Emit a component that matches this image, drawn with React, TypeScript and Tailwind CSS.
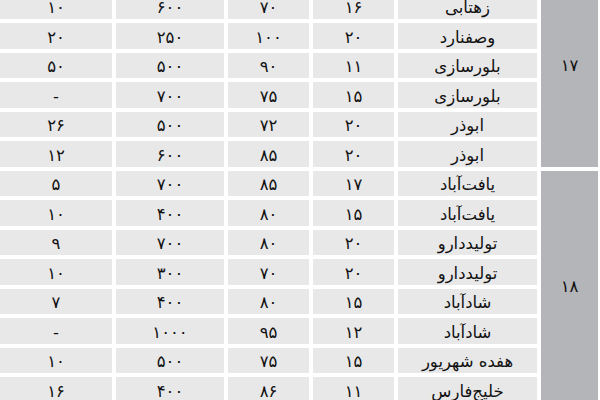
type Row = [string, string, string, string, string];

const groups: { label: string; rows: Row[] }[] = [
  {
    label: "۱۷",
    rows: [
      ["زهتابی", "۱۶", "۷۰", "۶۰۰", "۱۰"],
      ["وصفنارد", "۲۰", "۱۰۰", "۲۵۰", "۲۰"],
      ["بلورسازی", "۱۱", "۹۰", "۵۰۰", "۵۰"],
      ["بلورسازی", "۱۵", "۷۵", "۷۰۰", "-"],
      ["ابوذر", "۲۰", "۷۲", "۵۰۰", "۲۶"],
      ["ابوذر", "۲۰", "۸۵", "۶۰۰", "۱۲"],
    ],
  },
  {
    label: "۱۸",
    rows: [
      ["یافت‌آباد", "۱۷", "۸۵", "۷۰۰", "۵"],
      ["یافت‌آباد", "۱۵", "۸۰", "۴۰۰", "۱۰"],
      ["تولیددارو", "۲۰", "۸۰", "۷۰۰", "۹"],
      ["تولیددارو", "۲۰", "۷۰", "۳۰۰", "۱۰"],
      ["شادآباد", "۱۵", "۸۰", "۴۰۰", "۷"],
      ["شادآباد", "۱۲", "۹۵", "۱۰۰۰", "-"],
      ["هفده شهریور", "۱۵", "۷۵", "۵۰۰", "۱۰"],
      ["خلیج‌فارس", "۱۱", "۸۶", "۴۰۰", "۱۶"],
    ],
  },
];

export default function App() {
  return (
    <div className="w-[600px] h-[400px] overflow-hidden bg-white">
      <div
        dir="rtl"
        className="grid grid-cols-[57px_139px_81px_81px_108px_1fr] auto-rows-[25.5px] gap-[4px] mr-[2px] -mt-[6.5px] text-[16.5px] text-[#111]"
        style={{ fontFamily: '"DejaVu Sans", sans-serif' }}
      >
        {groups.map((g, gi) => [
          <div
            key={"g" + gi}
            className={
              gi === 0
                ? "row-span-6 bg-[#b4b5b8] flex items-center justify-center pb-[28px]"
                : "row-span-8 bg-[#b4b5b8] flex items-center justify-center pt-[2px]"
            }
          >
            {g.label}
          </div>,
          ...g.rows.flatMap((r, i) =>
            r.map((cell, j) => (
              <div
                key={gi + "-" + i + "-" + j}
                className="bg-[#e8e8e9] flex items-center justify-center leading-none pt-[4px]"
                style={{ gridColumn: j + 2 }}
              >
                {cell}
              </div>
            ))
          ),
        ])}
      </div>
    </div>
  );
}
